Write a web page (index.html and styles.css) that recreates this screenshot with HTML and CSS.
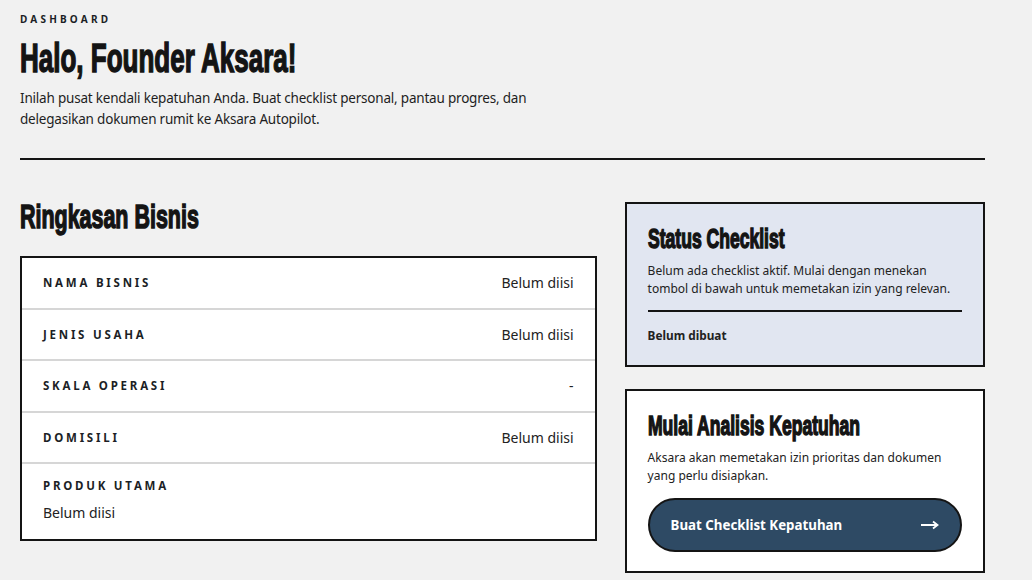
FILE: index.html
```html
<!DOCTYPE html>
<html lang="id">
<head>
<meta charset="utf-8">
<title>Dashboard</title>
<link rel="stylesheet" href="styles.css">
</head>
<body>
<main class="page">
  <header class="intro">
    <p class="eyebrow">DASHBOARD</p>
    <h1 class="display title"><span>Halo, Founder Aksara!</span></h1>
    <p class="lead">Inilah pusat kendali kepatuhan Anda. Buat checklist personal, pantau progres, dan delegasikan dokumen rumit ke Aksara Autopilot.</p>
  </header>
  <hr class="rule">
  <div class="grid">
    <section class="summary">
      <h2 class="display section-title"><span>Ringkasan Bisnis</span></h2>
      <div class="table">
        <div class="row"><span class="label">NAMA BISNIS</span><span class="value">Belum diisi</span></div>
        <div class="row"><span class="label">JENIS USAHA</span><span class="value">Belum diisi</span></div>
        <div class="row"><span class="label">SKALA OPERASI</span><span class="value">-</span></div>
        <div class="row"><span class="label">DOMISILI</span><span class="value">Belum diisi</span></div>
        <div class="row stacked"><span class="label">PRODUK UTAMA</span><span class="value">Belum diisi</span></div>
      </div>
    </section>
    <aside class="side">
      <div class="card card-status">
        <h3 class="display card-title"><span>Status Checklist</span></h3>
        <p class="card-text">Belum ada checklist aktif. Mulai dengan menekan tombol di bawah untuk memetakan izin yang relevan.</p>
        <div class="card-rule"></div>
        <p class="card-meta">Belum dibuat</p>
      </div>
      <div class="card">
        <h3 class="display card-title"><span>Mulai Analisis Kepatuhan</span></h3>
        <p class="card-text">Aksara akan memetakan izin prioritas dan dokumen yang perlu disiapkan.</p>
        <button class="cta" type="button"><span>Buat Checklist Kepatuhan</span><svg class="arrow" width="18" height="10" viewBox="0 0 18 10" aria-hidden="true"><path d="M0 5H16M12 1.5L16.5 5L12 8.5" fill="none" stroke="#fff" stroke-width="1.8" stroke-linejoin="miter"/></svg></button>
      </div>
    </aside>
  </div>
</main>
</body>
</html>
```

FILE: styles.css
```css
* { box-sizing: border-box; }
html, body { margin: 0; }
body {
  background: #f1f1f1;
  color: #161616;
  font-family: "Noto Sans", "Open Sans", sans-serif;
}
.page {
  padding: 12px 47px 60px 20px;
}
.eyebrow {
  margin: 0;
  font-size: 10px;
  line-height: 14px;
  font-weight: 700;
  letter-spacing: 0.32em;
  color: #1c1f26;
}
.display {
  font-family: "Liberation Sans", "Arial", sans-serif;
  font-weight: 700;
  color: #141414;
  -webkit-text-stroke: 1.5px #141414;
  min-width: 0;
}
.display span {
  display: inline-block;
  transform: scaleX(0.65);
  transform-origin: left center;
  white-space: nowrap;
}
.title {
  margin: 8px 0 0;
  font-size: 40px;
  line-height: 48px;
}
.lead {
  margin: 6px 0 0;
  max-width: 545px;
  font-size: 13.5px;
  letter-spacing: -0.2px;
  line-height: 21px;
  color: #1e1e1e;
}
.rule {
  margin: 28px 0 0;
  border: 0;
  border-top: 2px solid #141414;
}
.grid {
  display: grid;
  grid-template-columns: minmax(0, 1.6fr) minmax(0, 1fr);
  gap: 28px;
  margin-top: 41px;
  align-items: start;
}
.section-title {
  margin: 0;
  font-size: 33px;
  line-height: 32px;
}
.table {
  margin-top: 23px;
  background: #fff;
  border: 2px solid #141414;
}
.row {
  display: flex;
  justify-content: space-between;
  align-items: center;
  padding: 0 21px;
  height: 51.5px;
  border-bottom: 2px solid #d6d6d6;
}
.row:last-child { border-bottom: 0; }
.row.stacked {
  flex-direction: column;
  align-items: flex-start;
  justify-content: flex-start;
  height: auto;
  padding-top: 14px;
  padding-bottom: 17px;
  gap: 10px;
}
.label {
  font-size: 11.5px;
  font-weight: 700;
  letter-spacing: 0.24em;
  color: #1c1f26;
}
.value {
  font-size: 14px;
  color: #222;
}
.side {
  display: flex;
  flex-direction: column;
  gap: 22px;
  margin-top: 1px;
  min-width: 0;
}
.card {
  background: #fff;
  border: 2px solid #141414;
  padding: 20px 21px 19px;
  overflow: hidden;
}
.card-status {
  background: #e1e6f1;
  padding-bottom: 22px;
}
.card-title {
  margin: 0;
  font-size: 27px;
  line-height: 30px;
}
.card-text {
  margin: 8px 0 0;
  font-size: 12px;
  line-height: 18px;
  color: #222;
}
.card-rule {
  margin-top: 12px;
  border-top: 2px solid #141414;
}
.card-meta {
  margin: 15px 0 0;
  font-size: 11.8px;
  font-weight: 700;
  color: #222;
}
.cta {
  margin-top: 13px;
  width: 100%;
  height: 54px;
  display: flex;
  justify-content: space-between;
  align-items: center;
  padding: 0 21px;
  border: 2px solid #141414;
  border-radius: 999px;
  background: #2e4a64;
  color: #fff;
  font-family: inherit;
  font-size: 13.3px;
  font-weight: 700;
}
.cta .arrow { display: block; }
```
